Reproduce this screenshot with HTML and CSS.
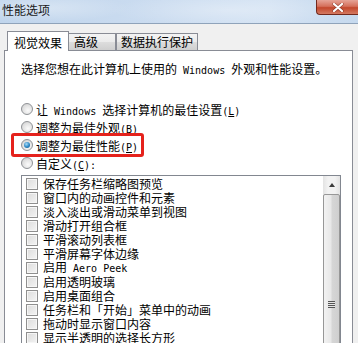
FILE: index.html
```html
<!DOCTYPE html>
<html lang="zh-CN">
  <head>
    <meta charset="UTF-8" />
    <title>性能选项</title>
    <link rel="stylesheet" href="styles.css">
  </head>

  <body>
    <div class="titlebar">
      <span class="title">性能选项</span>
      <span class="close">
        <svg width="12" height="9" viewBox="0 0 12 9">
          <path d="M2 1 L10 8 M10 1 L2 8" stroke="#5a1a10" stroke-width="3.4" stroke-linecap="round" opacity="0.5" />
          <path d="M2 1 L10 8 M10 1 L2 8" stroke="#fff" stroke-width="2.2" stroke-linecap="round" />
        </svg>
      </span>
    </div>

    <div class="dialog">
      <div class="tabs">
        <div class="tab active">视觉效果</div>
        <div class="tab first">高级</div>
        <div class="tab wide">数据执行保护</div>
      </div>
      <!--Tabs end-->

      <div class="panel">
        <p class="desc">选择您想在此计算机上使用的<span class="latin"> Windows </span>外观和性能设置。</p>

        <div class="options">
          <div class="option">
            <span class="radio"></span>
            <span>让<span class="latin"> Windows </span>选择计算机的最佳设置<span class="latin">(<u>L</u>)</span></span>
          </div>
          <div class="option">
            <span class="radio"></span>
            <span>调整为最佳外观<span class="latin">(<u>B</u>)</span></span>
          </div>
          <div class="option marked">
            <span class="radio checked"></span>
            <span>调整为最佳性能<span class="latin">(<u>P</u>)</span></span>
            <span class="marker"></span>
          </div>
          <div class="option">
            <span class="radio"></span>
            <span>自定义<span class="latin">(<u>C</u>):</span></span>
          </div>
        </div>
        <!--Options end-->

        <div class="listbox">
          <div class="items">
            <div class="item"><span class="check"></span><span>保存任务栏缩略图预览</span></div>
            <div class="item"><span class="check"></span><span>窗口内的动画控件和元素</span></div>
            <div class="item"><span class="check"></span><span>淡入淡出或滑动菜单到视图</span></div>
            <div class="item"><span class="check"></span><span>滑动打开组合框</span></div>
            <div class="item"><span class="check"></span><span>平滑滚动列表框</span></div>
            <div class="item"><span class="check"></span><span>平滑屏幕字体边缘</span></div>
            <div class="item"><span class="check"></span><span>启用<span class="latin"> Aero Peek</span></span></div>
            <div class="item"><span class="check"></span><span>启用透明玻璃</span></div>
            <div class="item"><span class="check"></span><span>启用桌面组合</span></div>
            <div class="item"><span class="check"></span><span>任务栏和「开始」菜单中的动画</span></div>
            <div class="item"><span class="check"></span><span>拖动时显示窗口内容</span></div>
            <div class="item"><span class="check"></span><span>显示半透明的选择长方形</span></div>
          </div>
          <div class="scrollbar">
            <div class="arrow"><span class="up"></span></div>
            <div class="thumb"><span class="grip"></span></div>
          </div>
        </div>
        <!--Listbox end-->
      </div>
      <!--Panel end-->
    </div>
  </body>
</html>
```

FILE: styles.css
```css
body,
html {
  margin: 0;
  padding: 0;
}

body {
  width: 358px;
  height: 343px;
  overflow: hidden;
  background: #f0f0f0;
  color: #000;
  font-family: "Noto Sans CJK SC", sans-serif;
  font-size: 12px;
}

.latin {
  font-family: "DejaVu Sans Mono", monospace;
  font-size: 10px;
  white-space: pre;
}

u {
  text-decoration-thickness: 1px;
  text-underline-offset: 1px;
}

/* title bar */
.titlebar {
  display: flex;
  justify-content: space-between;
  align-items: flex-start;
  height: 23px;
  border-bottom: 1px solid #8fa3ba;
  background:
    radial-gradient(ellipse 90px 14px at 40px 8px, rgba(255, 255, 255, 0.35), transparent),
    radial-gradient(ellipse 120px 16px at 230px 10px, rgba(255, 255, 255, 0.3), transparent),
    linear-gradient(to right, #c0d5ec, #cbdcf0 45%, #d3e2f3 75%, #c6d9ee);
}

.title {
  padding: 3px 0 0 2px;
  line-height: 14px;
  color: #1a1a1a;
}

.close {
  display: flex;
  align-items: center;
  justify-content: center;
  width: 42px;
  height: 15px;
  box-sizing: border-box;
  border: 1px solid #73291d;
  border-top: 0;
  border-right: 0;
  border-bottom-left-radius: 4px;
  background: linear-gradient(#e6a497, #d5705b 45%, #c3472c 55%, #d47a62);
}

/* dialog */
.dialog {
  padding-top: 7px;
}

.tabs {
  display: flex;
  align-items: flex-end;
  padding-left: 7px;
}

.tab {
  box-sizing: border-box;
  height: 17px;
  padding-left: 5px;
  border: 1px solid #898c95;
  border-bottom: 0;
  line-height: 16px;
  background: linear-gradient(#f3f3f3, #ebebeb 50%, #dddddd 51%, #cfcfcf);
}

.tab.active {
  position: relative;
  z-index: 1;
  width: 62px;
  height: 20px;
  margin-bottom: -1px;
  padding-left: 6px;
  line-height: 21px;
  background: #fff;
}

.tab.first {
  width: 48px;
  margin-left: -1px;
}

.tab.wide {
  width: 82px;
  padding-left: 4px;
}

.panel {
  box-sizing: border-box;
  width: 349px;
  height: 300px;
  margin-left: 4px;
  padding-left: 16px;
  border: 1px solid #898c95;
  background: #fff;
}

.desc {
  margin: 11px 0 0;
  line-height: 14px;
}

.options {
  margin-top: 22px;
}

.option {
  display: flex;
  align-items: center;
  gap: 3px;
  height: 18px;
}

.option.marked {
  position: relative;
}

.marker {
  position: absolute;
  left: -10px;
  top: -3px;
  width: 133px;
  height: 24px;
  box-sizing: border-box;
  border: 3px solid #e5221c;
  border-radius: 3px;
}

.radio {
  box-sizing: border-box;
  width: 12px;
  height: 12px;
  border: 1px solid #8f9296;
  border-radius: 50%;
  background: radial-gradient(circle at 60% 65%, #fbfbfb, #e2e2e2 55%, #c9c9c9);
  display: flex;
  align-items: center;
  justify-content: center;
}

.radio.checked::after {
  content: "";
  width: 6px;
  height: 6px;
  border-radius: 50%;
  background: radial-gradient(circle at 40% 35%, #a9dcf7, #2a86c4 55%, #174f7e);
}

/* list box */
.listbox {
  display: flex;
  box-sizing: border-box;
  width: 320px;
  height: 180px;
  margin-top: 3px;
  border: 1px solid #828790;
  background: #fff;
}

.items {
  flex: 1;
  padding: 1px 0 0 4px;
}

.item {
  display: flex;
  align-items: center;
  gap: 5px;
  height: 14px;
  line-height: 14px;
  white-space: nowrap;
}

.check {
  box-sizing: border-box;
  width: 12px;
  height: 12px;
  border: 1px solid #8f8f8f;
  background: linear-gradient(135deg, #dcdcdc, #f4f4f4);
  box-shadow: inset 0 0 0 1px #f6f6f6;
}

.scrollbar {
  width: 17px;
  background: linear-gradient(to right, #e3e3e3, #f2f2f2 30%, #f2f2f2 70%, #e3e3e3);
}

.arrow {
  display: flex;
  align-items: center;
  justify-content: center;
  height: 18px;
}

.up {
  width: 0;
  height: 0;
  border-left: 3px solid transparent;
  border-right: 3px solid transparent;
  border-bottom: 4px solid #3c3c3c;
}

.thumb {
  display: flex;
  align-items: center;
  justify-content: center;
  box-sizing: border-box;
  height: 220px;
  border: 1px solid #979797;
  border-radius: 2px;
  background: linear-gradient(to right, #f2f2f2, #e8e8e8 45%, #d6d6d6 55%, #cfcfcf);
}

.grip {
  width: 7px;
  height: 7px;
  background: repeating-linear-gradient(#555 0 1px, #e6e6e6 1px 2px);
}
```
